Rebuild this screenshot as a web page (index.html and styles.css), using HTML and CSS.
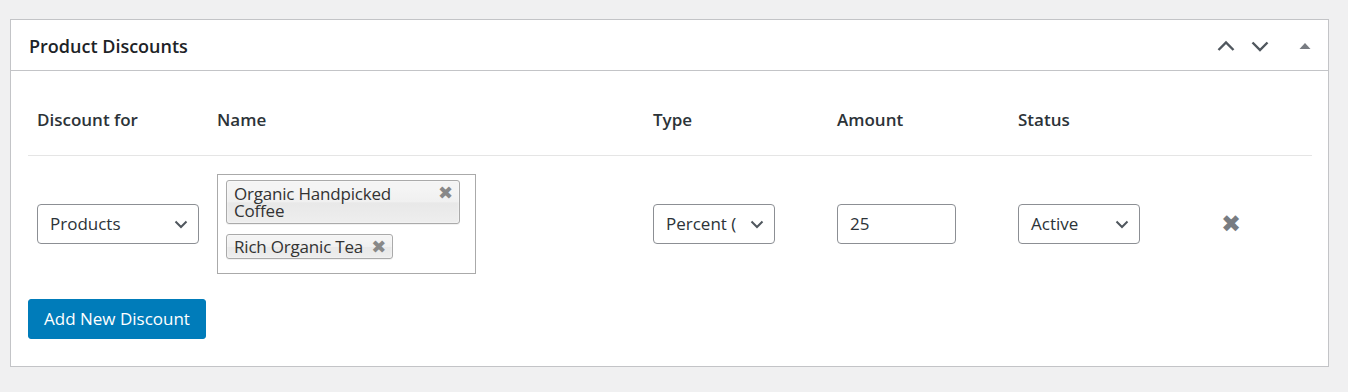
FILE: index.html
```html
<!DOCTYPE html>
<html lang="en">
<head>
<meta charset="utf-8">
<title>Product Discounts</title>
<link rel="stylesheet" href="styles.css">
</head>
<body>
<div class="postbox">
  <div class="postbox-header">
    <h2 class="postbox-title">Product Discounts</h2>
    <div class="handle-actions">
      <button class="handle-btn" aria-label="Move up">
        <svg width="20" height="20" viewBox="0 0 20 20"><path d="M2.5 14 L10 6.5 L17.5 14" fill="none" stroke="#50575e" stroke-width="2.4"/></svg>
      </button>
      <button class="handle-btn" aria-label="Move down">
        <svg width="20" height="20" viewBox="0 0 20 20"><path d="M2.5 6.5 L10 14 L17.5 6.5" fill="none" stroke="#50575e" stroke-width="2.4"/></svg>
      </button>
      <button class="handle-btn toggle" aria-label="Toggle panel">
        <svg width="20" height="20" viewBox="0 0 20 20"><path d="M4.5 13 L10 7 L15.5 13 Z" fill="#787c82"/></svg>
      </button>
    </div>
  </div>
  <div class="inside">
    <table class="discounts">
      <thead>
        <tr>
          <th class="col-for">Discount for</th>
          <th class="col-name">Name</th>
          <th class="col-type">Type</th>
          <th class="col-amount">Amount</th>
          <th class="col-status">Status</th>
          <th class="col-remove"></th>
        </tr>
      </thead>
      <tbody>
        <tr>
          <td>
            <div class="select w-products"><span class="val">Products</span><svg class="chev" width="14" height="14" viewBox="0 0 14 14"><path d="M1.5 4.5 L7 10 L12.5 4.5" fill="none" stroke="#50575e" stroke-width="2"/></svg></div>
          </td>
          <td>
            <div class="multi">
              <div class="tag"><span class="tag-text">Organic Handpicked Coffee</span><span class="tag-x">✖</span></div>
              <div class="tag"><span class="tag-text">Rich Organic Tea</span><span class="tag-x">✖</span></div>
            </div>
          </td>
          <td>
            <div class="select w-type"><span class="val">Percent (</span><svg class="chev" width="14" height="14" viewBox="0 0 14 14"><path d="M1.5 4.5 L7 10 L12.5 4.5" fill="none" stroke="#50575e" stroke-width="2"/></svg></div>
          </td>
          <td>
            <div class="input">25</div>
          </td>
          <td>
            <div class="select w-status"><span class="val">Active</span><svg class="chev" width="14" height="14" viewBox="0 0 14 14"><path d="M1.5 4.5 L7 10 L12.5 4.5" fill="none" stroke="#50575e" stroke-width="2"/></svg></div>
          </td>
          <td>
            <span class="remove">✖</span>
          </td>
        </tr>
      </tbody>
    </table>
    <button class="add-btn">Add New Discount</button>
  </div>
</div>
</body>
</html>
```

FILE: styles.css
```css
* { box-sizing: border-box; }
html, body { margin: 0; }
body {
  background: #f0f0f1;
  padding: 19px 19px 0 10px;
  font-family: "Open Sans", "Noto Sans", sans-serif;
  color: #1d2327;
  height: 392px;
}
.postbox {
  background: #fff;
  border: 1px solid #c3c4c7;
  height: 348px;
}
.postbox-header {
  height: 51px;
  border-bottom: 1px solid #c3c4c7;
  display: flex;
  align-items: center;
  justify-content: space-between;
  padding: 1px 13px 0 18px;
}
.postbox-title {
  margin: 0;
  font-size: 18px;
  font-weight: 600;
  color: #1d2327;
}
.handle-actions { display: flex; align-items: center; gap: 14px; }
.handle-btn {
  border: 0; background: none; padding: 0; width: 20px; height: 20px;
  display: flex; align-items: center; justify-content: center;
}
.handle-btn.toggle { margin-left: 11px; }
.inside { padding: 14px 16px 0 17px; }
.discounts {
  width: 100%;
  border-collapse: collapse;
  table-layout: fixed;
}
.discounts th {
  text-align: left;
  font-size: 17px;
  font-weight: 600;
  color: #2c3338;
  height: 70px;
  padding: 0 9px;
  border-bottom: 1px solid #e5e5e5;
}
.col-for { width: 180px; }
.col-name { width: 436px; }
.col-type { width: 184px; }
.col-amount { width: 181px; }
.col-status { width: 204px; }
.discounts td {
  padding: 18px 9px 17px;
  vertical-align: middle;
  font-size: 17px;
}
.select {
  height: 40px;
  border: 1px solid #8c8f94;
  border-radius: 4px;
  display: flex;
  align-items: center;
  padding: 0 10px 0 12px;
  color: #2c3338;
  font-size: 17px;
  background: #fff;
}
.select .val { white-space: nowrap; flex: 1; margin-right: 4px; }
.chev { flex: none; }
.w-products { width: 162px; }
.w-type { width: 122px; }
.w-status { width: 122px; }
.input {
  width: 119px;
  height: 40px;
  border: 1px solid #8c8f94;
  border-radius: 4px;
  display: flex;
  align-items: center;
  padding: 0 12px;
  color: #2c3338;
  font-size: 17px;
}
.multi {
  width: 259px;
  height: 100px;
  border: 1px solid #aaa;
  padding: 5px 0 0 8px;
  display: flex;
  flex-direction: column;
  align-items: flex-start;
  gap: 10px;
}
.tag {
  position: relative;
  max-width: 234px;
  border: 1px solid #aaa;
  border-radius: 3px;
  background: linear-gradient(#f4f4f4 20%, #f0f0f0 50%, #e8e8e8 52%, #eee 100%);
  box-shadow: 0 0 2px #fff inset, 0 1px 0 rgba(0,0,0,0.05);
  padding: 4px 30px 4px 7px;
  font-size: 17px;
  line-height: 17px;
  color: #333;
  letter-spacing: -0.2px;
}
.tag + .tag { padding: 3px 29px 3px 7px; }
.tag-x {
  position: absolute;
  right: 6px;
  top: 3px;
  color: #888;
  font-size: 18px;
  line-height: 17px;
  font-family: "DejaVu Sans", sans-serif;
}
.remove {
  display: inline-block;
  color: #787c82;
  font-size: 24px;
  font-family: "DejaVu Sans", sans-serif;
  margin-left: -1px;
}
.add-btn {
  margin-top: 8px;
  height: 40px;
  padding: 0 15px;
  background: #007cba;
  border: 1px solid #007cba;
  border-radius: 3px;
  color: #fff;
  font-family: inherit;
  font-size: 17px;
}
```
